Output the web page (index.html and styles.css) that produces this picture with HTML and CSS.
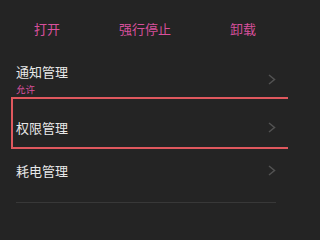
FILE: index.html
```html
<!DOCTYPE html>
<html lang="zh">
<head>
<meta charset="utf-8">
<link rel="stylesheet" href="styles.css">
</head>
<body>
<div class="page">
  <div class="actions">
    <span class="action">打开</span>
    <span class="action">强行停止</span>
    <span class="action">卸载</span>
  </div>
  <div class="row row-tall">
    <div class="text">
      <div class="title">通知管理</div>
      <div class="sub">允许</div>
    </div>
    <svg class="chev" width="8" height="11" viewBox="0 0 8 11"><polyline points="1,1 6.5,5.5 1,10" fill="none" stroke="#525252" stroke-width="1.5"/></svg>
  </div>
  <div class="row">
    <div class="title">权限管理</div>
    <svg class="chev" width="8" height="11" viewBox="0 0 8 11"><polyline points="1,1 6.5,5.5 1,10" fill="none" stroke="#525252" stroke-width="1.5"/></svg>
  </div>
  <div class="row">
    <div class="title">耗电管理</div>
    <svg class="chev" width="8" height="11" viewBox="0 0 8 11"><polyline points="1,1 6.5,5.5 1,10" fill="none" stroke="#525252" stroke-width="1.5"/></svg>
  </div>
  <div class="divider"></div>
  <div class="highlight"></div>
</div>
</body>
</html>
```
FILE: styles.css
```css
html, body {
  margin: 0;
  padding: 0;
  background: #242424;
  overflow: hidden;
}
.page {
  position: relative;
  width: 288px;
  height: 221px;
  overflow: hidden;
  font-family: "Noto Sans CJK SC", "Noto Sans", sans-serif;
  color: #e8e8e8;
}
.actions {
  display: grid;
  grid-template-columns: 98px 98px 98px;
  margin-left: -2px;
  padding: 20px 0 15px;
  height: 18px;
}
.action {
  text-align: center;
  font-size: 13px;
  line-height: 18px;
  color: #d8509c;
}
.row {
  display: flex;
  align-items: center;
  justify-content: space-between;
  height: 43px;
  padding: 0 12px 0 16px;
}
.row-tall {
  height: 53px;
}
.text {
  padding-bottom: 2px;
}
.title {
  font-size: 13px;
  line-height: 18px;
}
.sub {
  font-size: 9.5px;
  line-height: 12px;
  margin-top: 2px;
  color: #d8509c;
}
.chev {
  display: block;
}
.divider {
  margin: 10px 12px 0 16px;
  height: 1px;
  background: #383838;
}
.highlight {
  position: absolute;
  left: 11px;
  top: 97px;
  right: -40px;
  height: 48px;
  border: 2px solid #e0585e;
}
```
